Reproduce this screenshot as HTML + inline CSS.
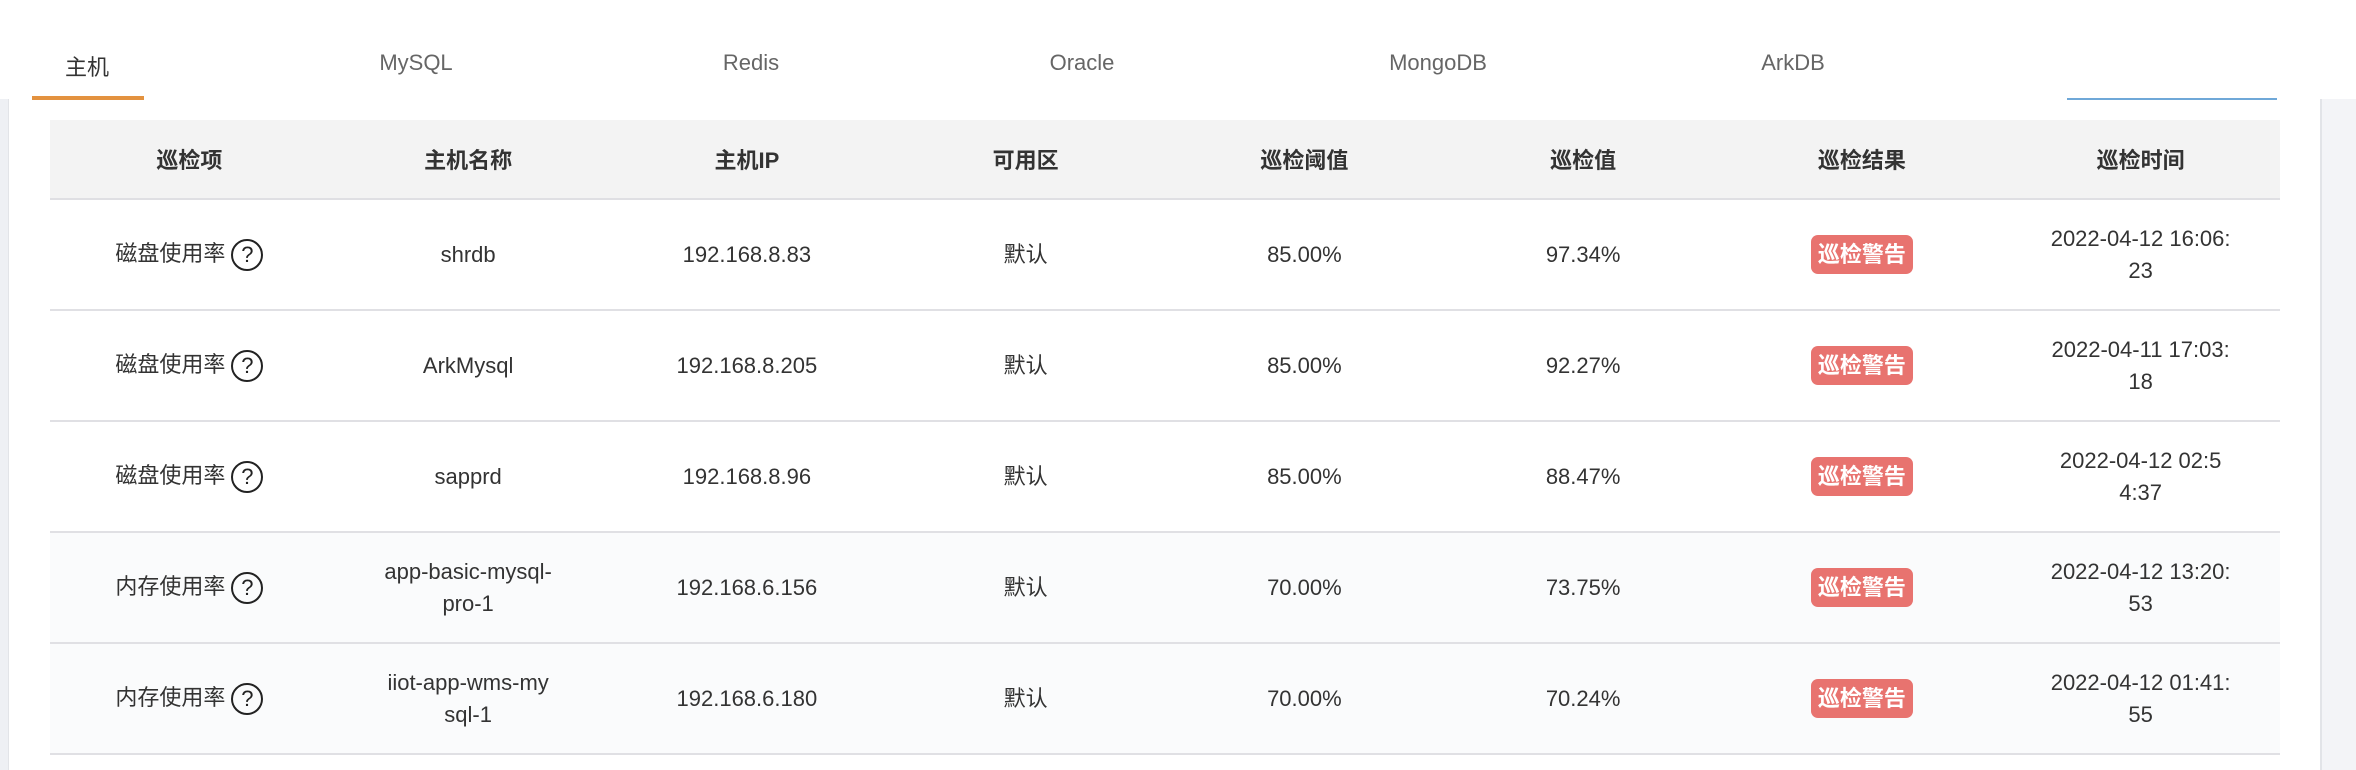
<!DOCTYPE html>
<html><head><meta charset="utf-8"><style>
*{margin:0;padding:0;box-sizing:border-box}
body{width:2356px;height:770px;background:#fff;font-family:"Liberation Sans","Noto Sans CJK SC",sans-serif;position:relative;overflow:hidden;color:#333}
.tab{position:absolute;top:50px;font-size:22px;color:#666;transform:translateX(-50%);white-space:nowrap}
.tab.a{color:#333}
.ul{position:absolute;left:32px;top:96px;width:112px;height:4px;background:#e3923f}
.bl{position:absolute;left:2067px;top:98px;width:210px;height:2px;background:#6fa8d8}
.lg{position:absolute;left:0;top:99px;width:9px;height:671px;background:#eef0f4;border-right:1px solid #e2e4e8}
.rg{position:absolute;left:2320px;top:99px;width:36px;height:671px;background:#f3f4f7;border-left:2px solid #e2e4e8}
table{position:absolute;left:50px;top:120px;width:2230px;border-collapse:collapse;table-layout:fixed}
th{height:79px;background:#f3f3f3;font-size:22px;font-weight:bold;color:#333;border-bottom:2px solid #dfdfe3}
td{height:111px;font-size:22px;text-align:center;border-bottom:2px solid #e0e0e4;line-height:32px;white-space:nowrap}
tr.g td{background:#fafbfc}
.q{display:inline-block;width:32px;height:32px;border:2.5px solid #222;border-radius:50%;font-size:22px;line-height:27px;color:#222;vertical-align:middle;margin-left:6px;text-align:center}
.b{display:inline-block;background:#e8736f;color:#fff;border-radius:7px;padding:0 7px;line-height:39px;height:39px;font-weight:bold}
</style></head><body>
<div class="tab a" style="left:87px">主机</div>
<div class="tab" style="left:416px">MySQL</div>
<div class="tab" style="left:751px">Redis</div>
<div class="tab" style="left:1082px">Oracle</div>
<div class="tab" style="left:1438px">MongoDB</div>
<div class="tab" style="left:1793px">ArkDB</div>
<div class="lg"></div><div class="rg"></div>
<div class="ul"></div><div class="bl"></div>
<table>
<tr><th>巡检项</th><th>主机名称</th><th>主机IP</th><th>可用区</th><th>巡检阈值</th><th>巡检值</th><th>巡检结果</th><th>巡检时间</th></tr>
<tr><td>磁盘使用率<span class="q">?</span></td><td>shrdb</td><td>192.168.8.83</td><td>默认</td><td>85.00%</td><td>97.34%</td><td><span class="b">巡检警告</span></td><td>2022-04-12 16:06:<br>23</td></tr>
<tr><td>磁盘使用率<span class="q">?</span></td><td>ArkMysql</td><td>192.168.8.205</td><td>默认</td><td>85.00%</td><td>92.27%</td><td><span class="b">巡检警告</span></td><td>2022-04-11 17:03:<br>18</td></tr>
<tr><td>磁盘使用率<span class="q">?</span></td><td>sapprd</td><td>192.168.8.96</td><td>默认</td><td>85.00%</td><td>88.47%</td><td><span class="b">巡检警告</span></td><td>2022-04-12 02:5<br>4:37</td></tr>
<tr class="g"><td>内存使用率<span class="q">?</span></td><td>app-basic-mysql-<br>pro-1</td><td>192.168.6.156</td><td>默认</td><td>70.00%</td><td>73.75%</td><td><span class="b">巡检警告</span></td><td>2022-04-12 13:20:<br>53</td></tr>
<tr class="g"><td>内存使用率<span class="q">?</span></td><td>iiot-app-wms-my<br>sql-1</td><td>192.168.6.180</td><td>默认</td><td>70.00%</td><td>70.24%</td><td><span class="b">巡检警告</span></td><td>2022-04-12 01:41:<br>55</td></tr>
</table>
</body></html>
